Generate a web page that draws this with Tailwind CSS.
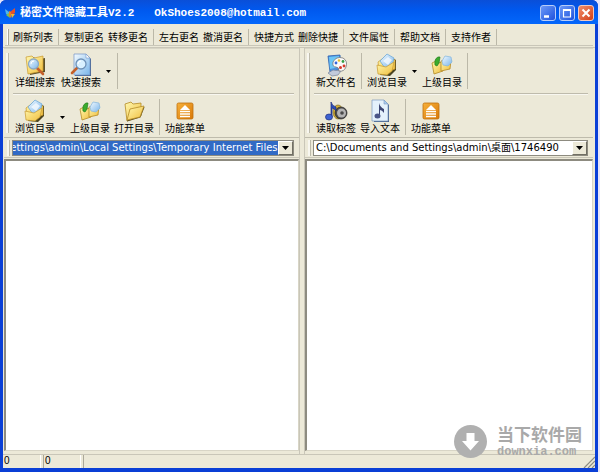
<!DOCTYPE html>
<html lang="zh-CN">
<head>
    <meta charset="UTF-8"/>
    <meta name="viewport" content="width=device-width, initial-scale=1.0"/>
    <title>秘密文件隐藏工具V2.2</title>
    <script src="https://cdn.jsdelivr.net/npm/@tailwindcss/browser@4"></script>
</head>
<body class="bg-[#e4e4fa] font-['Liberation_Sans','Noto_Sans_CJK_SC',sans-serif] text-[10px] leading-3 text-black">

<!-- shared icons -->
<svg class="absolute size-0" aria-hidden="true">
    <defs>
        <linearGradient id="gold" x1="0" y1="0" x2="1" y2="1">
            <stop offset="0" stop-color="#fff8b0"/><stop offset="1" stop-color="#f0bd3c"/>
        </linearGradient>
        <linearGradient id="sky" x1="0" y1="0" x2="1" y2="1">
            <stop offset="0" stop-color="#f4fbff"/><stop offset="1" stop-color="#79b5ea"/>
        </linearGradient>
        <linearGradient id="orange" x1="0" y1="0" x2="1" y2="1">
            <stop offset="0" stop-color="#f6b13c"/><stop offset="1" stop-color="#d97808"/>
        </linearGradient>
    </defs>
    <symbol id="i-folder-search" viewBox="0 0 24 24">
        <path d="M5 5l6-1 2 3 9-2v14l-15 3z" fill="#5d5128"/>
        <path d="M3 4l6-1 2 2 9-2v15l-15 3z" fill="url(#gold)" stroke="#c99a2c" stroke-width=".7"/>
        <path d="M14 15l6 6" stroke="#c4602a" stroke-width="2.600" stroke-linecap="round"/>
        <circle cx="10.500" cy="11" r="5" fill="url(#sky)" stroke="#8ba9c4" stroke-width="1.300"/>
        <path d="M8 11q0-3 3-3" stroke="#fff" fill="none"/>
    </symbol>
    <symbol id="i-page-search" viewBox="0 0 24 24">
        <path d="M6 2h12l4 4v17H6z" fill="#44608a"/>
        <path d="M5 1h12l4 4v17H5z" fill="url(#sky)" stroke="#7294c6" stroke-width=".7"/>
        <path d="M17 1l4 4h-4z" fill="#fff" stroke="#7294c6" stroke-width=".6"/>
        <path d="M8 15l-5 5" stroke="#c4602a" stroke-width="2.600" stroke-linecap="round"/>
        <circle cx="12" cy="11" r="5" fill="#d9f0ff" stroke="#6f92b8" stroke-width="1.300"/>
        <path d="M9 11q0-3 3-3" stroke="#fff" fill="none"/>
    </symbol>
    <symbol id="i-browse" viewBox="0 0 24 24">
        <path d="M12 2l9 5v10l-6 6-10-1z" fill="#4c4420"/>
        <path d="M3 9l8-6 9 4v9l-9 3-7-3z" fill="url(#gold)" stroke="#c99a2c" stroke-width=".7"/>
        <path d="M5 8l7-7 7 4-2 9-7 1z" fill="url(#sky)" stroke="#6fa9d8" stroke-width=".8"/>
        <path d="M8 8l5-4 4 3-4 5z" fill="#fff" opacity=".7"/>
        <path d="M2 12l9 2 8-5-2 9-5 4-9-1z" fill="url(#gold)" stroke="#c99a2c" stroke-width=".7"/>
    </symbol>
    <symbol id="i-up" viewBox="0 0 24 24">
        <path d="M2 10l4-2 2 2 5-1v9l-9 3z" fill="url(#gold)" stroke="#b48a26" stroke-width=".8"/>
        <path d="M11 8l4-1 1 1 5-1-1 9-9 2z" fill="url(#gold)" stroke="#b48a26" stroke-width=".8"/>
        <path d="M12 8l3-5 6 1 1 5-4 4-5-1z" fill="url(#sky)" stroke="#83b4dc" stroke-width=".7"/>
        <path d="M5 12q-1-6 3-8l2 0-1 6-2 3z" fill="#3bab2c" stroke="#217f1b" stroke-width=".7"/>
    </symbol>
    <symbol id="i-folder" viewBox="0 0 24 24">
        <path d="M3 5l6-2 2 2 8-1v13l-14 5z" fill="url(#gold)" stroke="#b48a26" stroke-width=".8"/>
        <path d="M5 22l13-4 4-10" fill="none" stroke="#5d4f22" stroke-width="1.200"/>
        <path d="M5 21l3-11 14-3-4 11z" fill="url(#gold)" stroke="#b48a26" stroke-width=".8"/>
    </symbol>
    <symbol id="i-menu" viewBox="0 0 24 24">
        <rect x="4" y="4" width="16" height="16" rx="1.500" fill="url(#orange)" stroke="#c0700e" stroke-width=".8"/>
        <path d="M12 6l5 5H7z" fill="#fff"/>
        <path d="M7 12.500h10M7 15h10M7 17.500h10" stroke="#fff" stroke-width="1.500"/>
    </symbol>
    <symbol id="i-palette" viewBox="0 0 24 24">
        <path d="M4 3l12-1 1 14-11 3z" fill="#4c91e0" stroke="#2c62b0" stroke-width=".8"/>
        <path d="M5 4l10-1v11l-9 2z" fill="#6cc6f6"/>
        <path d="M4 20l5-3 8 1-3 4-6 1z" fill="#c2cbdc" stroke="#77849c" stroke-width=".7"/>
        <path d="M9 9q3-6 10-4 5 3 3 9-2 5-7 4 0-4-3-4-4 0-3-5z" fill="#fafafa" stroke="#777" stroke-width=".8"/>
        <circle cx="12" cy="10" r="1.400" fill="#3567dc"/><circle cx="15" cy="7.500" r="1.300" fill="#ecc025"/>
        <circle cx="19" cy="8.500" r="1.400" fill="#36a044"/><circle cx="20" cy="13" r="1.400" fill="#d63a2a"/>
        <circle cx="16.500" cy="14.500" r="1.500" fill="#d63a2a"/>
    </symbol>
    <symbol id="i-sound" viewBox="0 0 24 24">
        <ellipse cx="14" cy="13" rx="5" ry="7" fill="#d8b236" stroke="#7d6a22" stroke-width=".7"/>
        <circle cx="17" cy="14" r="6" fill="#4d4d4d" stroke="#222" stroke-width=".7"/>
        <circle cx="17.500" cy="14" r="4.500" fill="#b4b4b4"/><circle cx="18" cy="14" r="1.800" fill="#4a4a4a"/>
        <path d="M7 18V3q1 4 5 5v4q-2-3-4-3v9z" fill="#2d4fb8" stroke="#1c2c7c" stroke-width=".7"/>
        <ellipse cx="5" cy="18" rx="3.500" ry="3" fill="#3d62d0" stroke="#1c2c7c" stroke-width=".7"/>
    </symbol>
    <symbol id="i-page-note" viewBox="0 0 24 24">
        <path d="M6 2h11l4 4v17H6z" fill="#44608a"/>
        <path d="M4 1h12l4 4v17H4z" fill="#e4f1fc" stroke="#7c98bf" stroke-width=".7"/>
        <path d="M16 1l4 4h-4z" fill="#a9cdf0" stroke="#7c98bf" stroke-width=".6"/>
        <path d="M11 17V4q1 4 5 6v4q-2-3-4-3v6z" fill="#3d4674"/>
        <ellipse cx="9.500" cy="17" rx="3" ry="2.500" fill="#4a5588"/>
    </symbol>
</svg>

<div class="h-screen pr-0.5">
<div class="flex h-full flex-col overflow-hidden rounded-t-md bg-[#0a3fd6]">

    <!-- title bar -->
    <header class="flex h-6 shrink-0 items-center bg-linear-to-b from-[#0a4fd8] via-[#0058ee] via-40% to-[#0467fb] pt-0.5 pr-1 pl-1 text-[11px] font-bold text-white">
        <svg class="mr-1 size-3" viewBox="0 0 12 12">
            <path d="M1 2l4 3 1 4-4-2z" fill="#52b4e8"/><path d="M6 5l5-4v5l-4 2z" fill="#e8502a"/>
            <path d="M5 6l1 5-4-3z" fill="#7fc04c"/><path d="M7 7l4 0-3 4z" fill="#f4b72e"/><path d="M5 4l2 1v6l-2-2z" fill="#e67f28"/>
        </svg>
        <h1 class="flex-1 font-['Liberation_Mono','Noto_Sans_CJK_SC',monospace] whitespace-pre">秘密文件隐藏工具V2.2   OkShoes2008@hotmail.com</h1>
        <div class="flex gap-[3px]">
            <button aria-label="最小化" class="size-4 rounded-[3px] border border-[#b8cdf8] bg-linear-to-br from-[#6c98f8] to-[#1e50dc]">
                <svg viewBox="0 0 14 14"><path d="M3 10.500h5" stroke="#fff" stroke-width="2.500"/></svg>
            </button>
            <button aria-label="最大化" class="size-4 rounded-[3px] border border-[#b8cdf8] bg-linear-to-br from-[#6c98f8] to-[#1e50dc]">
                <svg viewBox="0 0 14 14"><path d="M3 3.500h8M3.500 3v8h7V3" fill="none" stroke="#fff" stroke-width="1.200"/><path d="M3 4h8" stroke="#fff" stroke-width="2"/></svg>
            </button>
            <button aria-label="关闭" class="size-4 rounded-[3px] border border-[#f4c8bc] bg-linear-to-br from-[#f08c68] to-[#d23c10]">
                <svg viewBox="0 0 14 14"><path d="M3.500 3.500l7 7M10.500 3.500l-7 7" stroke="#fff" stroke-width="2"/></svg>
            </button>
        </div>
    </header>

    <div class="mx-[3px] mb-1 flex min-h-0 flex-1 flex-col bg-[#ece9d8]">

        <!-- main menu -->
        <nav class="mx-0.5 flex h-[22px] shrink-0 items-center border-b border-[#c9c6b8] pt-1">
            <i class="mx-0.5 h-4 w-0.5 border-r border-[#aca899] bg-white"></i>
            <button class="w-11 pt-0.5">刷新列表</button>
            <i class="mx-[3px] h-4 w-px bg-[#bbb8a8]"></i>
            <button class="w-11 pt-0.5">复制更名</button>
            <button class="w-11 pt-0.5">转移更名</button>
            <i class="mx-[3px] h-4 w-px bg-[#bbb8a8]"></i>
            <button class="w-11 pt-0.5">左右更名</button>
            <button class="w-11 pt-0.5">撤消更名</button>
            <i class="mx-[3px] h-4 w-px bg-[#bbb8a8]"></i>
            <button class="w-11 pt-0.5">快捷方式</button>
            <button class="w-11 pt-0.5">删除快捷</button>
            <i class="mx-[3px] h-4 w-px bg-[#bbb8a8]"></i>
            <button class="w-11 pt-0.5">文件属性</button>
            <i class="mx-[3px] h-4 w-px bg-[#bbb8a8]"></i>
            <button class="w-11 pt-0.5">帮助文档</button>
            <i class="mx-[3px] h-4 w-px bg-[#bbb8a8]"></i>
            <button class="w-11 pt-0.5">支持作者</button>
            <i class="mx-[3px] h-4 w-px bg-[#bbb8a8]"></i>
        </nav>

        <main class="mt-px grid min-h-0 flex-1 grid-cols-[297fr_289fr] gap-1 border-t border-[#c9c6b8] pr-0.5">

            <!-- left pane -->
            <section class="flex min-w-0 flex-col border-r border-[#c9c6b8] pl-px">
                <div class="flex h-[90px] shrink-0 border-y border-[#bebbac] border-t-[#d8d5c6] pr-[5px] pl-0.5">
                    <i class="my-1 mr-1 w-[3px] border-r border-[#bebbac] bg-[#f8f7f0]"></i>
                    <div class="flex-1">
                        <div class="flex h-[45px] items-start border-b border-[#bebbac] pt-1">
                            <button class="mr-0.5 flex w-11 flex-col items-center"><svg class="size-6"><use href="#i-folder-search"/></svg>详细搜索</button>
                            <button class="flex w-11 flex-col items-center"><svg class="size-6"><use href="#i-page-search"/></svg>快速搜索</button>
                            <button aria-label="更多搜索" class="flex h-9 w-[11px] items-center justify-center"><svg class="h-[3px] w-[5px]" viewBox="0 0 5 3"><path d="M0 0h5L2.500 3z"/></svg></button>
                            <i class="mx-[3px] h-9 w-px bg-[#bbb8a8]"></i>
                        </div>
                        <div class="flex items-start border-t border-[#f8f7f0] pt-1">
                            <button class="flex w-11 flex-col items-center"><svg class="size-6"><use href="#i-browse"/></svg>浏览目录</button>
                            <button aria-label="更多目录" class="flex h-9 w-[11px] items-center justify-center"><svg class="h-[3px] w-[5px]" viewBox="0 0 5 3"><path d="M0 0h5L2.500 3z"/></svg></button>
                            <button class="flex w-11 flex-col items-center"><svg class="size-6"><use href="#i-up"/></svg>上级目录</button>
                            <button class="flex w-11 flex-col items-center"><svg class="size-6"><use href="#i-folder"/></svg>打开目录</button>
                            <i class="mx-[3px] h-9 w-px bg-[#bbb8a8]"></i>
                            <button class="flex w-11 flex-col items-center"><svg class="size-6"><use href="#i-menu"/></svg>功能菜单</button>
                        </div>
                    </div>
                </div>
                <div class="flex h-5 shrink-0 items-center border-b border-[#c9c6b8] pr-[5px] pl-[3px]">
                    <i class="mr-0.5 h-4 w-[3px] border-r border-[#bebbac] bg-[#f8f7f0]"></i>
                    <div class="flex h-4 min-w-0 flex-1 border border-[#8d8b80] bg-white">
                        <input id="leftPath" aria-label="左侧目录" class="min-w-0 flex-1 bg-[#316ac5] font-['DejaVu_Sans','Noto_Sans_CJK_SC',sans-serif] text-[10px] text-white outline-none" value="C:\Documents and Settings\admin\Local Settings\Temporary Internet Files"/>
                        <button aria-label="展开左侧目录" class="flex w-[15px] items-center justify-center border border-[#fff] border-r-[#716f64] border-b-[#716f64] bg-[#ece9d8]"><svg class="h-1 w-[7px]" viewBox="0 0 7 4"><path d="M0 0h7L3.500 4z"/></svg></button>
                    </div>
                </div>
                <div class="mt-px mb-[3px] flex-1 border border-t-2 border-l-2 border-[#d8d5c6] border-t-[#8d8b80] border-l-[#8d8b80] bg-white"></div>
            </section>

            <!-- right pane -->
            <section class="flex min-w-0 flex-col border-l border-[#c9c6b8]">
                <div class="flex h-[90px] shrink-0 border-y border-[#bebbac] border-t-[#d8d5c6] pr-[5px] pl-0.5">
                    <i class="my-1 mr-1 w-[3px] border-r border-[#bebbac] bg-[#f8f7f0]"></i>
                    <div class="flex-1">
                        <div class="flex h-[45px] items-start border-b border-[#bebbac] pt-1">
                            <button class="flex w-11 flex-col items-center"><svg class="size-6"><use href="#i-palette"/></svg>新文件名</button>
                            <i class="mx-[3px] h-9 w-px bg-[#bbb8a8]"></i>
                            <button class="flex w-11 flex-col items-center"><svg class="size-6"><use href="#i-browse"/></svg>浏览目录</button>
                            <button aria-label="更多目录" class="flex h-9 w-[11px] items-center justify-center"><svg class="h-[3px] w-[5px]" viewBox="0 0 5 3"><path d="M0 0h5L2.500 3z"/></svg></button>
                            <button class="flex w-11 flex-col items-center"><svg class="size-6"><use href="#i-up"/></svg>上级目录</button>
                            <i class="mx-[3px] h-9 w-px bg-[#bbb8a8]"></i>
                        </div>
                        <div class="flex items-start border-t border-[#f8f7f0] pt-1">
                            <button class="flex w-11 flex-col items-center"><svg class="size-6"><use href="#i-sound"/></svg>读取标签</button>
                            <button class="flex w-11 flex-col items-center"><svg class="size-6"><use href="#i-page-note"/></svg>导入文本</button>
                            <i class="mx-[3px] h-9 w-px bg-[#bbb8a8]"></i>
                            <button class="flex w-11 flex-col items-center"><svg class="size-6"><use href="#i-menu"/></svg>功能菜单</button>
                        </div>
                    </div>
                </div>
                <div class="flex h-5 shrink-0 items-center border-b border-[#c9c6b8] pr-[5px] pl-[3px]">
                    <i class="mr-0.5 h-4 w-[3px] border-r border-[#bebbac] bg-[#f8f7f0]"></i>
                    <div class="flex h-4 min-w-0 flex-1 border border-[#8d8b80] bg-white">
                        <input aria-label="右侧目录" class="min-w-0 flex-1 pl-0.5 font-['DejaVu_Sans','Noto_Sans_CJK_SC',sans-serif] text-[10px] outline-none" value="C:\Documents and Settings\admin\桌面\1746490"/>
                        <button aria-label="展开右侧目录" class="flex w-[15px] items-center justify-center border border-[#fff] border-r-[#716f64] border-b-[#716f64] bg-[#ece9d8]"><svg class="h-1 w-[7px]" viewBox="0 0 7 4"><path d="M0 0h7L3.500 4z"/></svg></button>
                    </div>
                </div>
                <div class="mt-px mb-[3px] flex-1 border border-t-2 border-l-2 border-[#d8d5c6] border-t-[#8d8b80] border-l-[#8d8b80] bg-white"></div>
            </section>
        </main>

        <!-- status bar -->
        <footer class="flex h-[14px] shrink-0 gap-0.5 border-t border-[#c9c6b8]">
            <span class="w-[38px] border-r border-white pl-px">0</span>
            <span class="w-[38px] border-r border-l border-white border-l-[#aca899] pl-px">0</span>
            <span class="flex flex-1 items-end justify-end border-l border-[#aca899]">
                <svg class="size-3" viewBox="0 0 12 12"><path d="M1 12L12 1M5 12l7-7M9 12l3-3" stroke="#8d8b80" stroke-width="1.200"/></svg>
            </span>
        </footer>
    </div>
</div>
</div>

<!-- watermark -->
<div class="absolute right-[18px] bottom-3.5 flex items-center gap-2.5 text-[#a9a9a9]">
    <svg class="size-[33px]" viewBox="0 0 33 33"><circle cx="16.500" cy="16.500" r="16.500" fill="#b0b0b0"/><path d="M12.500 8h8v8h4.500l-8.500 9.500L8 16h4.500z" fill="#fff"/></svg>
    <div>
        <p class="text-[17px] leading-5 font-bold">当下软件园</p>
        <p class="font-['Liberation_Mono',monospace] text-xs leading-3 font-bold">downxia.com</p>
    </div>
</div>

<script>
    // show the tail of the long path
    const leftPath = document.getElementById('leftPath');
    leftPath.scrollLeft = leftPath.scrollWidth;
</script>

</body>
</html>
